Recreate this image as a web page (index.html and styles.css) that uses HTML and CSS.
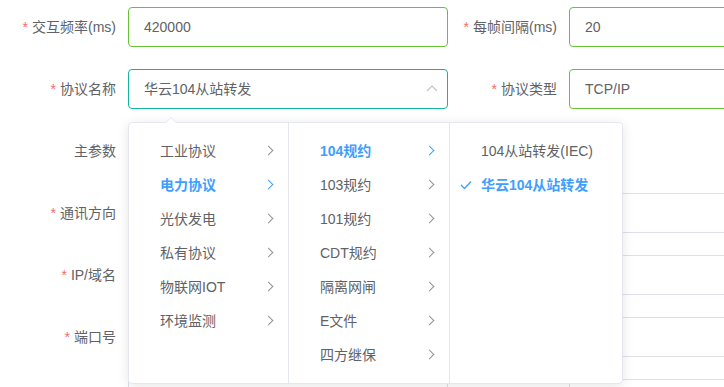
FILE: index.html
```html
<!DOCTYPE html>
<html lang="zh-CN">
<head>
    <meta charset="UTF-8">
    <title>协议配置</title>
    <link rel="stylesheet" href="styles.css">
</head>
<body>
    <div class="form">
        <div class="form-row">
            <div class="form-item">
                <label class="form-label required">交互频率(ms)</label>
                <div class="field ok">420000</div>
            </div>
            <div class="form-item item-right">
                <label class="form-label required">每帧间隔(ms)</label>
                <div class="field ok">20</div>
            </div>
        </div>

        <div class="form-row">
            <div class="form-item">
                <label class="form-label required">协议名称</label>
                <div class="select">
                    <div class="field focus">华云104从站转发</div>
                    <svg class="select-arrow" width="12" height="8" viewBox="0 0 12 8"><path d="M1 7 L6 2 L11 7" fill="none" stroke="#c0c4cc" stroke-width="1.2"/></svg>

                    <div class="cascader-panel">
                        <span class="popper-arrow"></span>
                        <ul class="menu">
                            <li class="node">工业协议<i class="chev"></i></li>
                            <li class="node active">电力协议<i class="chev"></i></li>
                            <li class="node">光伏发电<i class="chev"></i></li>
                            <li class="node">私有协议<i class="chev"></i></li>
                            <li class="node">物联网IOT<i class="chev"></i></li>
                            <li class="node">环境监测<i class="chev"></i></li>
                        </ul>
                        <ul class="menu">
                            <li class="node active">104规约<i class="chev"></i></li>
                            <li class="node">103规约<i class="chev"></i></li>
                            <li class="node">101规约<i class="chev"></i></li>
                            <li class="node">CDT规约<i class="chev"></i></li>
                            <li class="node">隔离网闸<i class="chev"></i></li>
                            <li class="node">E文件<i class="chev"></i></li>
                            <li class="node">四方继保<i class="chev"></i></li>
                        </ul>
                        <ul class="menu menu-last">
                            <li class="node">104从站转发(IEC)</li>
                            <li class="node active">
                                <svg class="check" width="12" height="10" viewBox="0 0 12 10"><path d="M1 5 L4.5 8.5 L11 1.5" fill="none" stroke="#409eff" stroke-width="1.3"/></svg>
                                华云104从站转发
                            </li>
                        </ul>
                    </div>
                </div>
            </div>
            <div class="form-item item-right">
                <label class="form-label required">协议类型</label>
                <div class="field ok">TCP/IP</div>
            </div>
        </div>

        <div class="form-row">
            <div class="form-item">
                <label class="form-label">主参数</label>
                <div class="field"></div>
            </div>
        </div>

        <div class="form-row">
            <div class="form-item">
                <label class="form-label required">通讯方向</label>
                <div class="field"></div>
            </div>
            <div class="form-item item-right">
                <label class="form-label"></label>
                <div class="field"></div>
            </div>
        </div>

        <div class="form-row">
            <div class="form-item">
                <label class="form-label required">IP/域名</label>
                <div class="field"></div>
            </div>
            <div class="form-item item-right">
                <label class="form-label"></label>
                <div class="field"></div>
            </div>
        </div>

        <div class="form-row">
            <div class="form-item">
                <label class="form-label required">端口号</label>
                <div class="field"></div>
            </div>
            <div class="form-item item-right">
                <label class="form-label"></label>
                <div class="field"></div>
            </div>
        </div>

        <div class="form-row">
            <div class="form-item">
                <label class="form-label"></label>
                <div class="field"></div>
            </div>
            <div class="form-item item-right">
                <label class="form-label"></label>
                <div class="field"></div>
            </div>
        </div>
    </div>
</body>
</html>
```

FILE: styles.css
```css
html, body {
    margin: 0;
    padding: 0;
    background-color: #fff;
    overflow: hidden;
}
body {
    width: 724px;
    height: 387px;
    font-family: 'Liberation Sans', 'Noto Sans CJK SC', sans-serif;
    font-size: 14px;
    color: #606266;
}
.form {
    padding-top: 7px;
}
.form-row {
    display: flex;
    height: 40px;
    margin-bottom: 22px;
}
.form-item {
    display: flex;
    align-items: center;
}
.form-label {
    width: 128px;
    padding-right: 12px;
    box-sizing: border-box;
    text-align: right;
    line-height: 40px;
    flex-shrink: 0;
}
.item-right .form-label {
    width: 121px;
}
.required::before {
    content: '*';
    color: #f56c6c;
    margin-right: 4px;
}
.field {
    width: 320px;
    height: 40px;
    box-sizing: border-box;
    border: 1px solid #dcdfe6;
    border-radius: 4px;
    padding: 0 15px;
    line-height: 38px;
    color: #606266;
    background-color: #fff;
    flex-shrink: 0;
}
.field.ok {
    border-color: #67c23a;
}
.field.focus {
    border-color: #17b3a0;
}
.select {
    position: relative;
    z-index: 2;
}
.select-arrow {
    position: absolute;
    right: 10px;
    top: 15px;
}
.cascader-panel {
    position: absolute;
    left: 0;
    top: 53px;
    display: flex;
    background-color: #fff;
    border: 1px solid #e4e7ed;
    border-radius: 4px;
    box-shadow: 0 2px 12px rgba(0, 0, 0, 0.1);
}
.popper-arrow {
    position: absolute;
    left: 36px;
    top: -6px;
    width: 0;
    height: 0;
    border-left: 6px solid transparent;
    border-right: 6px solid transparent;
    border-bottom: 6px solid #e4e7ed;
}
.popper-arrow::after {
    content: '';
    position: absolute;
    left: -5px;
    top: 1px;
    border-left: 5px solid transparent;
    border-right: 5px solid transparent;
    border-bottom: 5px solid #fff;
}
.menu {
    list-style: none;
    margin: 0;
    padding: 11px 0;
    width: 160px;
    height: 238px;
    border-right: 1px solid #e4e7ed;
}
.menu:first-of-type {
    width: 159px;
}
.menu-last {
    width: 172px;
    border-right: none;
}
.node {
    position: relative;
    height: 34px;
    line-height: 34px;
    padding: 0 30px 0 31px;
    white-space: nowrap;
    color: #606266;
}
.node.active {
    color: #409eff;
    font-weight: bold;
}
.chev {
    position: absolute;
    right: 16px;
    top: 13px;
    width: 6px;
    height: 6px;
    border-top: 1px solid #909399;
    border-right: 1px solid #909399;
    transform: rotate(45deg);
}
.node.active .chev {
    border-color: #409eff;
}
.check {
    position: absolute;
    left: 10px;
    top: 12px;
}
```
